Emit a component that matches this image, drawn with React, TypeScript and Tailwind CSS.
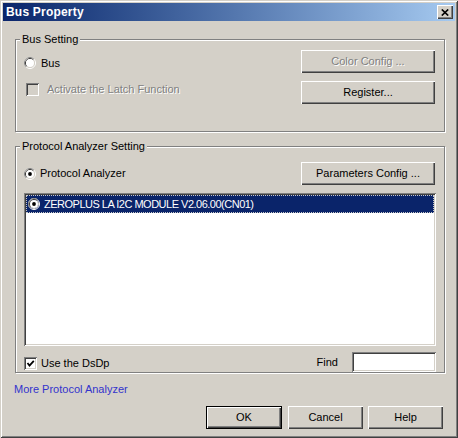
const raised =
  "bg-[#d4d0c8] shadow-[inset_1px_1px_#fff,inset_-1px_-1px_#404040,inset_-2px_-2px_#808080]";
const sunken =
  "shadow-[inset_1px_1px_#808080,inset_-1px_-1px_#fff,inset_2px_2px_#404040,inset_-2px_-2px_#d4d0c8]";
const etched = "border border-[#808080] shadow-[inset_1px_1px_#fff,1px_1px_#fff]";
const disabledText = "text-[#808080] [text-shadow:1px_1px_0_#fff]";

function Radio({ checked }: { checked?: boolean }) {
  return (
    <svg width="12" height="12" viewBox="0 0 12 12" className="shrink-0">
      <circle cx="6" cy="6" r="5.5" fill="none" stroke="#fff" />
      <path d="M2.11 9.89 A5.5 5.5 0 0 1 9.89 2.11" fill="none" stroke="#808080" />
      <circle cx="6" cy="6" r="4.5" fill="none" stroke="#d4d0c8" />
      <path d="M2.82 9.18 A4.5 4.5 0 0 1 9.18 2.82" fill="none" stroke="#404040" />
      <circle cx="6" cy="6" r="4" fill="#fff" />
      {checked && <circle cx="6" cy="6" r="1.9" fill="#000" />}
    </svg>
  );
}

function Check({ checked, disabled }: { checked?: boolean; disabled?: boolean }) {
  return (
    <div
      className={`w-[13px] h-[13px] shrink-0 ${sunken} ${disabled ? "bg-[#d4d0c8]" : "bg-white"}`}
    >
      {checked && (
        <svg width="13" height="13" viewBox="0 0 13 13">
          <path d="M3.5 6 L5.5 8.5 L9.8 3.8" fill="none" stroke="#000" strokeWidth="1.8" />
        </svg>
      )}
    </div>
  );
}

function Button({
  label,
  disabled,
  className,
}: {
  label: string;
  disabled?: boolean;
  className: string;
}) {
  return (
    <div className={`flex items-center justify-center ${raised} ${className}`}>
      <span className={disabled ? disabledText : ""}>{label}</span>
    </div>
  );
}

export default function App() {
  return (
    <div className="w-[458px] h-[438px] bg-[#d4d0c8] p-[3px] flex flex-col text-[11px] leading-[13px] text-black font-['Liberation_Sans',Arial,sans-serif] shadow-[inset_1px_1px_#d4d0c8,inset_-1px_-1px_#404040,inset_2px_2px_#fff,inset_-2px_-2px_#808080]">
      {/* title bar */}
      <div className="h-[18px] shrink-0 flex items-center justify-between pl-[3px] pr-[2px] bg-gradient-to-r from-[#0a246a] to-[#a6caf0]">
        <span className="text-white font-bold text-[12px] leading-[14px] tracking-[0.2px]">Bus Property</span>
        <div className={`w-[16px] h-[14px] flex items-center justify-center ${raised}`}>
          <svg width="8" height="7" viewBox="0 0 8 7">
            <path d="M0.8 0.5 L7.2 6.5 M7.2 0.5 L0.8 6.5" stroke="#000" strokeWidth="1.7" />
          </svg>
        </div>
      </div>

      <div className="flex-1 flex flex-col pl-[12px] pr-[10px]">
        {/* Bus Setting */}
        <div
          className={`relative mt-[18px] h-[93px] ${etched} flex justify-between pl-[8px] pr-[9px] pt-[10px]`}
        >
          <span className="absolute -top-[7px] left-[4px] px-[2px] bg-[#d4d0c8]">Bus Setting</span>
          <div className="flex flex-col pt-[6px] gap-[12px]">
            <div className="h-[14px] flex items-center gap-[5px]">
              <Radio />
              <span>Bus</span>
            </div>
            <div className="h-[14px] flex items-center gap-[8px] pl-[2px]">
              <Check disabled />
              <span className={disabledText}>Activate the Latch Function</span>
            </div>
          </div>
          <div className="flex flex-col gap-[8px]">
            <Button label="Color Config ..." disabled className="w-[134px] h-[23px]" />
            <Button label="Register..." className="w-[134px] h-[23px]" />
          </div>
        </div>

        {/* Protocol Analyzer Setting */}
        <div className={`relative mt-[14px] h-[227px] ${etched} flex flex-col pl-[8px] pr-[7px] pt-[15px]`}>
          <span className="absolute -top-[7px] left-[4px] px-[2px] bg-[#d4d0c8]">
            Protocol Analyzer Setting
          </span>
          <div className="flex items-center justify-between pr-[2px]">
            <div className="flex items-center gap-[4px]">
              <Radio checked />
              <span>Protocol Analyzer</span>
            </div>
            <Button label="Parameters Config ..." className="w-[134px] h-[23px]" />
          </div>
          <div className={`mt-[8px] w-[412px] h-[153px] bg-white p-[2px] ${sunken}`}>
            <div className="h-[18px] flex items-center gap-[4px] pl-[1px] bg-[#0a246a] border border-dotted border-[#c8c8c8] text-white">
              <Radio checked />
              <span className="tracking-[-0.5px]">ZEROPLUS LA I2C MODULE V2.06.00(CN01)</span>
            </div>
          </div>
          <div className="mt-[6px] flex items-center justify-between">
            <div className="flex items-center gap-[4px] pt-[2px]">
              <Check checked />
              <span>Use the DsDp</span>
            </div>
            <div className="flex items-center gap-[14px] mr-[1px]">
              <span>Find</span>
              <div className={`w-[84px] h-[20px] bg-white ${sunken}`} />
            </div>
          </div>
        </div>

        <span className="mt-[10px] -ml-[1px] text-[#3333cc]">More Protocol Analyzer</span>

        <div className="mt-[10px] flex justify-end pr-[2px]">
          <div className="w-[76px] h-[23px] border border-black flex">
            <Button label="OK" className="flex-1" />
          </div>
          <Button label="Cancel" className="ml-[6px] w-[75px] h-[23px]" />
          <Button label="Help" className="ml-[5px] w-[75px] h-[23px]" />
        </div>
      </div>
    </div>
  );
}
